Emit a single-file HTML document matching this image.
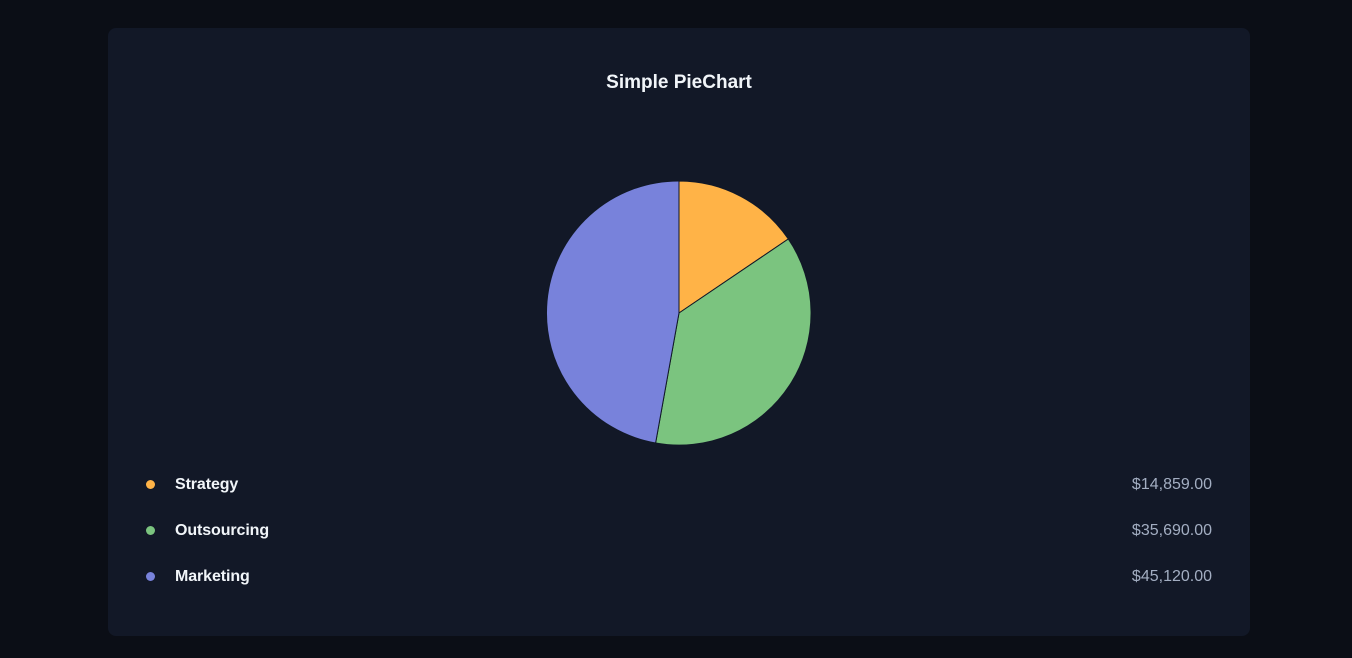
<!DOCTYPE html>
<html><head><style>
html,body{margin:0;padding:0;width:1352px;height:658px;background:#0b0e16;font-family:"Liberation Sans",sans-serif;overflow:hidden}
.card{position:absolute;left:108px;top:28px;width:1142px;height:608px;background:#121827;border-radius:8px}
.title{position:absolute;left:0;width:100%;top:44px;text-align:center;color:#f1f5f9;font-size:19px;font-weight:600}
.row{position:absolute;left:0;width:100%;height:20px;font-size:16px;font-weight:bold}
.dot{position:absolute;left:38px;top:5px;width:9px;height:9px;border-radius:50%}
.lab{position:absolute;left:67px;top:0;color:#f1f5f9;line-height:20px;letter-spacing:-0.1px}
.val{position:absolute;right:38px;top:0;color:#a3aec2;font-weight:normal;line-height:20px}
svg{position:absolute;left:0;top:0}
</style></head><body>
<div class="card">
<div class="title">Simple PieChart</div>
<div class="row" style="top:447px"><div class="dot" style="background:#ffb347"></div><div class="lab">Strategy</div><div class="val">$14,859.00</div></div>
<div class="row" style="top:493px"><div class="dot" style="background:#7bc47f"></div><div class="lab">Outsourcing</div><div class="val">$35,690.00</div></div>
<div class="row" style="top:539px"><div class="dot" style="background:#7882db"></div><div class="lab">Marketing</div><div class="val">$45,120.00</div></div>
</div>
<svg width="1352" height="658">
<g stroke="#111827" stroke-width="1">
<path d="M679,313 L679,181 A132,132 0 0 1 788.3,239 Z" fill="#ffb347"/>
<path d="M679,313 L788.3,239 A132,132 0 0 1 655.6,443 Z" fill="#7bc47f"/>
<path d="M679,313 L655.6,443 A132,132 0 0 1 679,181 Z" fill="#7882db"/>
</g>
</svg>
</body></html>
